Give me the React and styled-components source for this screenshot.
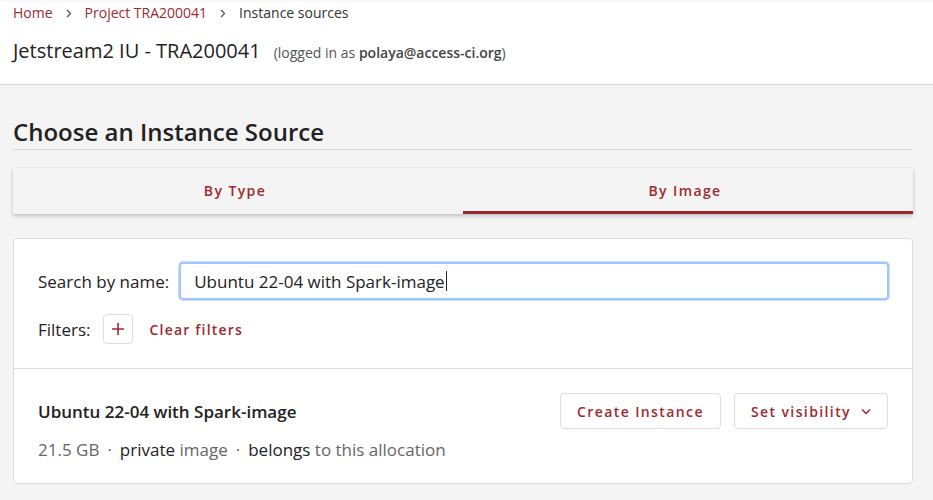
import styled, { createGlobalStyle } from 'styled-components';

const RED = '#9e2a2f';

const GlobalStyle = createGlobalStyle`
  html, body {
    margin: 0;
    padding: 0;
    background: #f4f4f4;
    font-family: 'Open Sans', 'Noto Sans', sans-serif;
    color: #222;
  }
  * { box-sizing: border-box; }
`;

const Header = styled.header`
  background: #fff;
  border-bottom: 1px solid #d8d8d8;
  padding: 4px 13px 0;
  height: 85px;
  box-shadow: inset 0 3px 3px -2px rgba(0, 0, 0, 0.06);
`;

const Crumbs = styled.nav`
  display: flex;
  align-items: center;
  gap: 13px;
  font-size: 14px;
  line-height: 18px;
`;

const Crumb = styled.span`
  color: ${(p) => (p.$link ? RED : '#333')};
`;

const TitleRow = styled.div`
  display: flex;
  align-items: baseline;
  gap: 13px;
  margin-top: 15px;
`;

const ProjectTitle = styled.h1`
  margin: 0;
  font-size: 20px;
  font-weight: 400;
  color: #222;
`;

const LoggedIn = styled.span`
  font-size: 14px;
  color: #555;
  b { font-weight: 600; color: #444; }
`;

const Main = styled.main`
  padding: 30px 20px 0 13px;
`;

const Heading = styled.h2`
  margin: 0;
  font-size: 24px;
  font-weight: 600;
  line-height: 33px;
  color: #222;
  padding-bottom: 1px;
  border-bottom: 1px solid #d6d6d6;
`;

const Tabs = styled.div`
  display: grid;
  grid-template-columns: 1fr 1fr;
  margin-top: 18px;
  height: 46px;
  background: #f4f4f4;
  box-shadow: 0 2px 4px rgba(0, 0, 0, 0.2), 0 0 2px rgba(0, 0, 0, 0.06);
`;

const Tab = styled.div`
  display: flex;
  align-items: center;
  justify-content: center;
  padding-top: ${(p) => (p.$active ? '1px' : '2px')};
  padding-right: 6px;
  font-size: 14px;
  font-weight: 600;
  letter-spacing: 1.4px;
  color: ${RED};
  border-bottom: 3px solid ${(p) => (p.$active ? RED : 'transparent')};
`;

const Card = styled.section`
  margin-top: 24px;
  background: #fff;
  border: 1px solid #dcdcdc;
  border-radius: 4px;
`;

const Controls = styled.div`
  padding: 23px 23px 24px 24px;
  display: flex;
  flex-direction: column;
  gap: 14px;
  border-bottom: 1px solid #dcdcdc;
`;

const Row = styled.div`
  display: flex;
  align-items: center;
  gap: 10px;
  font-size: 17px;
`;

const InputWrap = styled.div`
  position: relative;
  flex: 1;
  display: flex;
`;

const SearchInput = styled.input`
  flex: 1;
  height: 38px;
  border: 2px solid #9ec8fb;
  border-radius: 4px;
  padding: 0 13px;
  font-family: inherit;
  font-size: 17px;
  color: #222;
  outline: none;
  box-shadow: 0 0 0 1px #c9e0fd;
`;

const Caret = styled.span`
  position: absolute;
  top: 9px;
  width: 1px;
  height: 20px;
  background: #222;
`;

const PlusButton = styled.button`
  width: 30px;
  height: 30px;
  border: 1px solid #ddd;
  border-radius: 4px;
  background: #fff;
  display: flex;
  align-items: center;
  justify-content: center;
  padding: 0;
  margin-left: 3px;
`;

const LinkButton = styled.span`
  color: ${RED};
  font-size: 14px;
  font-weight: 600;
  letter-spacing: 1.2px;
  margin-left: 6px;
`;

const Item = styled.div`
  padding: 24px 24px 22px;
`;

const ItemTop = styled.div`
  display: flex;
  align-items: center;
  justify-content: space-between;
`;

const ItemName = styled.div`
  font-size: 17px;
  font-weight: 600;
  color: #222;
`;

const Actions = styled.div`
  display: flex;
  gap: 13px;
`;

const ActionButton = styled.button`
  height: 36px;
  padding: 0 16px;
  background: #fff;
  border: 1px solid #ddd;
  border-radius: 4px;
  font-family: inherit;
  font-size: 14px;
  font-weight: 600;
  letter-spacing: 1.4px;
  color: ${RED};
  display: flex;
  align-items: center;
  gap: 10px;
`;

const Meta = styled.div`
  margin-top: 9px;
  font-size: 17px;
  color: #666;
  b { font-weight: 400; color: #222; }
`;

const Dot = styled.span`
  margin: 0 8px;
`;

const Plus = () => (
  <svg width="14" height="14" viewBox="0 0 14 14">
    <path d="M7 1v12M1 7h12" stroke={RED} strokeWidth="1.6" />
  </svg>
);

const Chevron = () => (
  <svg width="10" height="7" viewBox="0 0 10 7">
    <path d="M1 1.5l4 4 4-4" stroke={RED} strokeWidth="1.5" fill="none" />
  </svg>
);

const CrumbSep = () => (
  <svg width="6" height="9" viewBox="0 0 6 9">
    <path d="M1 1l3.5 3.5L1 8" stroke="#555" strokeWidth="1.3" fill="none" />
  </svg>
);

export default function App() {
  return (
    <>
      <GlobalStyle />
      <Header>
        <Crumbs>
          <Crumb $link>Home</Crumb>
          <CrumbSep />
          <Crumb $link>Project TRA200041</Crumb>
          <CrumbSep />
          <Crumb>Instance sources</Crumb>
        </Crumbs>
        <TitleRow>
          <ProjectTitle>Jetstream2 IU - TRA200041</ProjectTitle>
          <LoggedIn>
            (logged in as <b>polaya@access-ci.org</b>)
          </LoggedIn>
        </TitleRow>
      </Header>
      <Main>
        <Heading>Choose an Instance Source</Heading>
        <Tabs>
          <Tab>By Type</Tab>
          <Tab $active>By Image</Tab>
        </Tabs>
        <Card>
          <Controls>
            <Row>
              <span>Search by name:</span>
              <InputWrap>
                <SearchInput defaultValue="Ubuntu 22-04 with Spark-image" />
                <Caret style={{ left: 267 }} />
              </InputWrap>
            </Row>
            <Row>
              <span>Filters:</span>
              <PlusButton>
                <Plus />
              </PlusButton>
              <LinkButton>Clear filters</LinkButton>
            </Row>
          </Controls>
          <Item>
            <ItemTop>
              <ItemName>Ubuntu 22-04 with Spark-image</ItemName>
              <Actions>
                <ActionButton>Create Instance</ActionButton>
                <ActionButton>
                  Set visibility <Chevron />
                </ActionButton>
              </Actions>
            </ItemTop>
            <Meta>
              21.5 GB<Dot>·</Dot>
              <b>private</b> image<Dot>·</Dot>
              <b>belongs</b> to this allocation
            </Meta>
          </Item>
        </Card>
      </Main>
    </>
  );
}
